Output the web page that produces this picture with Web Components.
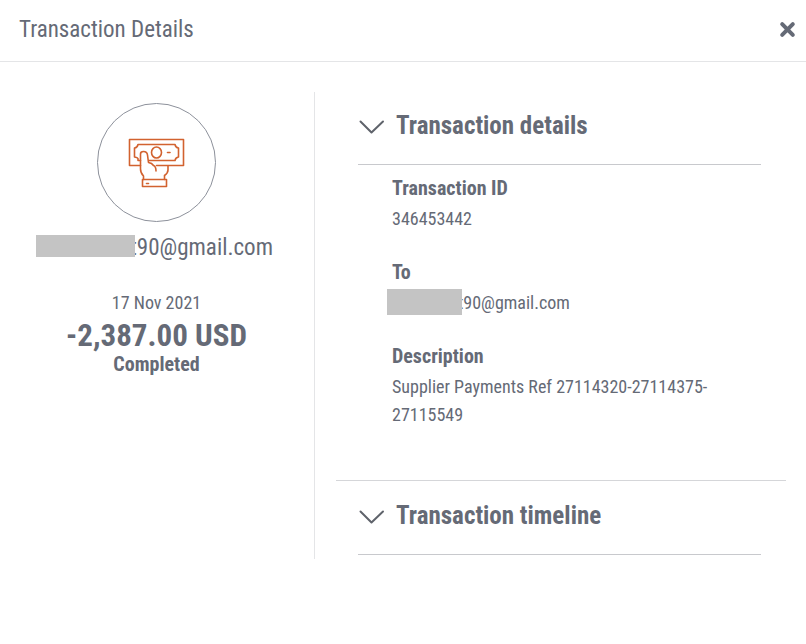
<!DOCTYPE html>
<html lang="en">
<head>
<meta charset="utf-8">
<title>Transaction Details</title>
<style>
body { margin: 0; background: #fff; color: #656a76; font-family: "Roboto Condensed", Roboto, "Liberation Sans Narrow", sans-serif; }
</style>
</head>
<body>
<transaction-dialog heading="Transaction Details">
  <payment-summary slot="summary" date="17 Nov 2021" amount="-2,387.00 USD" status="Completed">
    <masked-email size="large">t90@gmail.com</masked-email>
  </payment-summary>
  <detail-section heading="Transaction details" open>
    <detail-field label="Transaction ID">346453442</detail-field>
    <detail-field label="To"><masked-email>t90@gmail.com</masked-email></detail-field>
    <detail-field label="Description">Supplier Payments Ref 27114320-27114375-27115549</detail-field>
  </detail-section>
  <detail-section heading="Transaction timeline"></detail-section>
</transaction-dialog>

<script>
class BaseElement extends HTMLElement {
  connectedCallback() {
    if (this.shadowRoot) return;
    this.attachShadow({ mode: "open" }).innerHTML = this.view();
    this.shadowRoot.querySelectorAll("[data-attr]").forEach(n => {
      n.textContent = this.getAttribute(n.dataset.attr);
    });
    this.ready();
  }
  ready() {}
}

customElements.define("transaction-dialog", class extends BaseElement {
  view() {
    return `<style>
      :host { display: block; }
      header { display: flex; align-items: center; justify-content: space-between; padding: 16px 10px 17px 19px; border-bottom: 1px solid #e4e5e7; }
      h1 { margin: 0; font-size: 23px; line-height: 28px; font-weight: 400; }
      button { display: flex; padding: 0 0 2px; border: 0; background: none; color: inherit; cursor: pointer; }
      main { display: grid; grid-template-columns: 315fr 491fr; padding: 30px 0; }
      .summary { border-right: 1px solid #e4e5e7; }
      .sections { padding: 0 20px 4px 21px; }
    </style>
    <header><h1 data-attr="heading"></h1>
      <button type="button" aria-label="Close"><svg width="17" height="17" viewBox="0 0 17 17" fill="none" stroke="currentColor" stroke-width="4" stroke-linecap="round"><path d="M3.2 3.2 13.8 13.8M13.8 3.2 3.2 13.8"/></svg></button>
    </header>
    <main><div class="summary"><slot name="summary"></slot></div><div class="sections"><slot></slot></div></main>`;
  }
});

customElements.define("payment-summary", class extends BaseElement {
  view() {
    return `<style>
      :host { display: flex; flex-direction: column; align-items: center; padding: 11px 8px 0 7px; text-align: center; }
      .badge { display: flex; align-items: center; justify-content: center; width: 119px; height: 119px; border: 1px solid #8d919b; border-radius: 50%; box-sizing: border-box; }
      .email { margin-top: 12px; }
      .date { margin-top: 27px; font-size: 18px; line-height: 28px; }
      .amount { font-size: 31px; line-height: 38px; font-weight: 700; }
      .status { font-size: 20px; line-height: 18px; font-weight: 700; }
    </style>
    <div class="badge"><svg width="60" height="54" viewBox="127 136 60 54" fill="none" stroke="#d2622f" stroke-width="1.6" stroke-linejoin="round" stroke-linecap="round" aria-hidden="true">
      <path d="M140.500 165.500H129.500V139.500H183.500V165.500H156.500"/>
      <path d="M140.500 160.500H138V158.500Q137.500 157.500 134.500 157V148Q137.500 147.500 138 144.500H175Q175.500 147.500 178.500 148V157Q175.500 157.500 175 160.500H149"/>
      <ellipse cx="156.500" cy="152.500" rx="5" ry="5.500"/>
      <path d="M167.500 152.500H170"/>
      <path d="M143.500 179.500V176Q140.500 173 140.500 169V154Q140.500 151.500 143.500 151.500Q147 151.500 147.500 155L148.500 162.500Q152 163 153.500 165.500Q156 166.500 156 171"/>
      <path d="M168 166V170Q168 173 164.500 175.500V179.500"/>
      <rect x="142.500" y="179.500" width="24" height="7"/>
      <path d="M146.500 183.500H148.500"/>
    </svg></div>
    <div class="email"><slot></slot></div>
    <div class="date" data-attr="date"></div>
    <div class="amount" data-attr="amount"></div>
    <div class="status" data-attr="status"></div>`;
  }
});

customElements.define("masked-email", class extends BaseElement {
  view() {
    return `<style>
      :host { display: flex; align-items: center; font-size: 18px; line-height: 28px; }
      :host([size="large"]) { padding-right: 4px; font-size: 23px; }
      .mask { flex: none; width: 75px; height: 26px; margin: 0 -4px 2px -5px; background: #c4c4c4; z-index: 1; }
      :host([size="large"]) .mask { width: 99px; height: 22px; margin: 0 -5px 5px 0; }
    </style><span class="mask"></span><span><slot></slot></span>`;
  }
});

customElements.define("detail-section", class extends BaseElement {
  view() {
    return `<style>
      :host { display: block; }
      :host([open]) { border-bottom: 1px solid #d5d6d9; padding-bottom: 51px; }
      h2 { margin: 0 25px 0 22px; border-bottom: 1px solid #c8c9cd; }
      button { display: flex; align-items: center; gap: 11px; width: 100%; padding: 18px 0 22px 1px; border: 0; background: none; color: inherit; font: inherit; font-size: 25px; line-height: 32px; font-weight: 700; text-align: left; cursor: pointer; }
      :host(:not([open])) button { padding-top: 19px; }
      svg { flex: none; margin-top: 2px; }
      .fields { display: grid; gap: 23px; padding: 7px 60px 0 56px; }
      :host(:not([open])) .fields { display: none; }
    </style>
    <h2><button type="button"><svg width="26" height="14" viewBox="0 0 26 14" fill="none" stroke="#5f636b" stroke-width="2" stroke-linecap="round" stroke-linejoin="round" aria-hidden="true"><path d="M1.500 1.500 12.500 12.500 24 1.500"/></svg><span data-attr="heading"></span></button></h2>
    <div class="fields"><slot></slot></div>`;
  }
  ready() {
    const button = this.shadowRoot.querySelector("button");
    button.setAttribute("aria-expanded", this.hasAttribute("open"));
    button.addEventListener("click", () => {
      button.setAttribute("aria-expanded", this.toggleAttribute("open"));
    });
  }
});

customElements.define("detail-field", class extends BaseElement {
  view() {
    return `<style>
      :host { display: block; }
      h3 { margin: 0 0 1px; font-size: 20px; line-height: 32px; font-weight: 700; }
      .value { font-size: 18px; line-height: 28px; }
    </style><h3 data-attr="label"></h3><div class="value"><slot></slot></div>`;
  }
});
</script>
</body>
</html>
